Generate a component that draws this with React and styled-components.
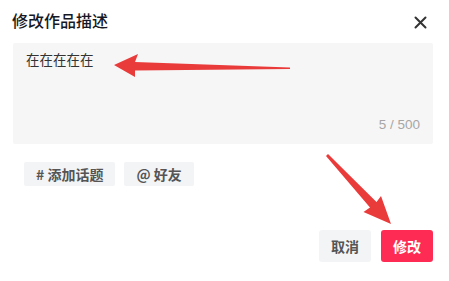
import React from "react";
import styled, { createGlobalStyle } from "styled-components";

const Global = createGlobalStyle`
  html, body {
    margin: 0;
    background: #fff;
  }
  body {
    font-family: "Noto Sans CJK SC", "Liberation Sans", sans-serif;
  }
`;

function App() {
  return (
    <Page>
      <Global />
      <Header>
        <Title>修改作品描述</Title>
        <Close aria-label="close">
          <svg width="13" height="13" viewBox="0 0 13 13">
            <path d="M1.5 1.5 L11.5 11.5 M11.5 1.5 L1.5 11.5" stroke="#333" strokeWidth="2" strokeLinecap="round" />
          </svg>
        </Close>
      </Header>
      <Editor>
        <Content>在在在在在</Content>
        <Counter>5 / 500</Counter>
      </Editor>
      <Tags>
        <Tag># 添加话题</Tag>
        <Tag>@ 好友</Tag>
      </Tags>
      <Footer>
        <Button>取消</Button>
        <Button primary>修改</Button>
      </Footer>
      <Arrows width="449" height="281" viewBox="0 0 449 281">
        <polygon
          points="114,65 138,54 135,62 290,67.5 290,69 135,70.5 135,77"
          fill="#ea3b3b"
        />
        <polygon
          points="326,156 328,154 376.5,202 381,196 391,224 363.5,212 370,207.5"
          fill="#ea3b3b"
        />
      </Arrows>
    </Page>
  );
}

export default App;

const Page = styled.div`
  position: relative;
  width: 449px;
  height: 281px;
  box-sizing: border-box;
  padding: 0 16px 0 13px;
`;

const Header = styled.div`
  display: flex;
  align-items: center;
  justify-content: space-between;
  height: 43px;
  margin-left: -1px;
`;

const Title = styled.div`
  font-size: 16px;
  font-weight: 500;
  color: #161823;
  margin-top: -3px;
`;

const Close = styled.div`
  display: flex;
  width: 13px;
  height: 13px;
  margin-right: 6px;
  margin-top: 2px;
`;

const Editor = styled.div`
  position: relative;
  height: 101px;
  background: #f6f6f6;
  border-radius: 2px;
  box-sizing: border-box;
  padding: 6px 13px 8px;
  display: flex;
  flex-direction: column;
  justify-content: space-between;
`;

const Content = styled.div`
  font-size: 13.5px;
  color: #333;
  line-height: 20px;
`;

const Counter = styled.div`
  align-self: flex-end;
  font-family: "Liberation Sans", sans-serif;
  font-size: 13.5px;
  color: #a6a6a6;
  margin-bottom: 4px;
`;

const Tags = styled.div`
  display: flex;
  gap: 9px;
  margin: 18px 0 0 11px;
`;

const Tag = styled.div`
  height: 24px;
  line-height: 24px;
  padding: 0 12px;
  background: #f3f4f5;
  border-radius: 2px;
  font-size: 14px;
  font-weight: 700;
  color: #555;
`;

const Footer = styled.div`
  display: flex;
  justify-content: flex-end;
  gap: 10px;
  margin-top: 44px;
`;

const Button = styled.div`
  width: 52px;
  height: 32px;
  display: flex;
  align-items: center;
  justify-content: center;
  border-radius: 3px;
  font-size: 14px;
  font-weight: 700;
  background: ${(p) => (p.primary ? "#fe2c55" : "#f3f4f5")};
  color: ${(p) => (p.primary ? "#fff" : "#555")};
`;

const Arrows = styled.svg`
  position: absolute;
  left: 0;
  top: 0;
  pointer-events: none;
`;
